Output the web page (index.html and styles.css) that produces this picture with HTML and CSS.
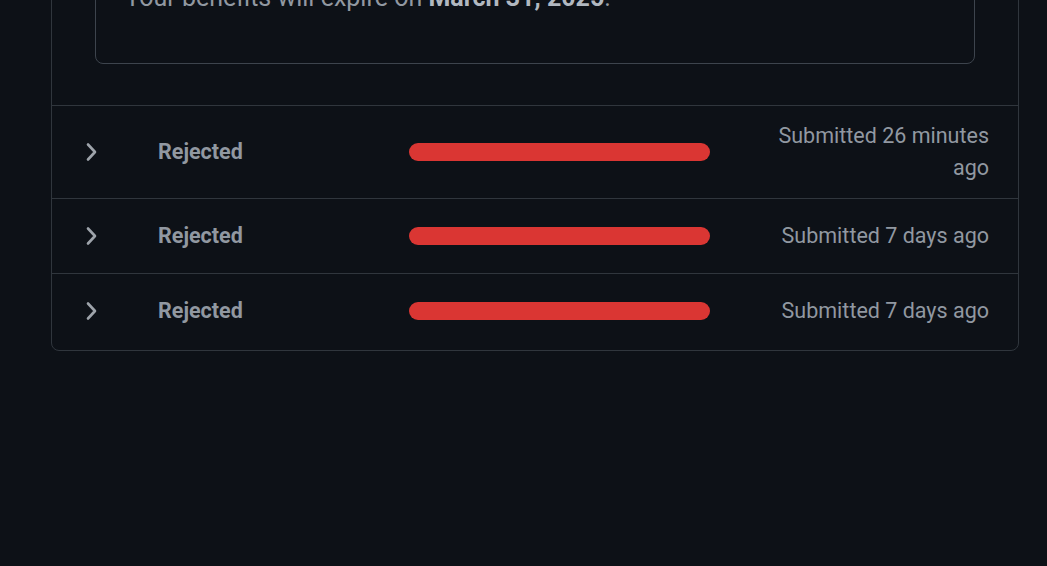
FILE: index.html
```html
<!DOCTYPE html>
<html lang="en">
<head>
    <meta charset="UTF-8" />
    <meta name="viewport" content="width=device-width, initial-scale=1" />
    <title>Benefit applications</title>
    <link rel="stylesheet" href="styles.css">
</head>
<body>
    <div class="page">
        <section class="card">
            <div class="card-head">
                <div class="notice">
                    <p>Your benefits will expire on <strong>March 31, 2025</strong>.</p>
                </div>
            </div>

            <ul class="applications">
                <li class="app-row">
                    <span class="toggle">
                        <svg width="13" height="20" viewBox="0 0 13 20" aria-hidden="true">
                            <path d="M3 2.5 L10 10 L3 17.5" fill="none" stroke="currentColor" stroke-width="2.6" stroke-linecap="round" stroke-linejoin="round"/>
                        </svg>
                    </span>
                    <span class="status">Rejected</span>
                    <span class="bar"></span>
                    <span class="submitted">Submitted 26 minutes ago</span>
                </li>
                <li class="app-row">
                    <span class="toggle">
                        <svg width="13" height="20" viewBox="0 0 13 20" aria-hidden="true">
                            <path d="M3 2.5 L10 10 L3 17.5" fill="none" stroke="currentColor" stroke-width="2.6" stroke-linecap="round" stroke-linejoin="round"/>
                        </svg>
                    </span>
                    <span class="status">Rejected</span>
                    <span class="bar"></span>
                    <span class="submitted">Submitted 7 days ago</span>
                </li>
                <li class="app-row">
                    <span class="toggle">
                        <svg width="13" height="20" viewBox="0 0 13 20" aria-hidden="true">
                            <path d="M3 2.5 L10 10 L3 17.5" fill="none" stroke="currentColor" stroke-width="2.6" stroke-linecap="round" stroke-linejoin="round"/>
                        </svg>
                    </span>
                    <span class="status">Rejected</span>
                    <span class="bar"></span>
                    <span class="submitted">Submitted 7 days ago</span>
                </li>
            </ul>
        </section>
    </div>
</body>
</html>
```

FILE: styles.css
```css
body {
    margin: 0;
    background: #0d1117;
    color: #9198a1;
    font-family: Roboto, "Liberation Sans", sans-serif;
    font-size: 21.5px;
    line-height: 32px;
}
.page {
    padding: 0 28px 0 51px;
    margin-top: -76px;
}
.card {
    border: 1px solid #30363d;
    border-radius: 8px;
}
.card-head {
    padding: 40px 43px 41px 43px;
    border-bottom: 1px solid #30363d;
}
.notice {
    border: 1px solid #3d444d;
    border-radius: 8px;
    padding: 16px 28px 49px 29px;
}
.notice p {
    margin: 0;
    font-size: 25px;
}
.notice strong {
    color: #b1b8c0;
}
.applications {
    list-style: none;
    margin: 0;
    padding: 0;
}
.app-row {
    display: grid;
    grid-template-columns: 73px 251px 301px 1fr;
    align-items: center;
    min-height: 46px;
    padding: 14px 29px 14px 33px;
    border-bottom: 1px solid #30363d;
}
.app-row:last-child {
    border-bottom: none;
    padding-bottom: 16px;
}
.toggle {
    display: flex;
    color: #9ea4ab;
}
.status {
    font-weight: 700;
}
.bar {
    height: 18px;
    border-radius: 9px;
    background: #da3633;
}
.submitted {
    justify-self: end;
    max-width: 215px;
    text-align: right;
}
```
